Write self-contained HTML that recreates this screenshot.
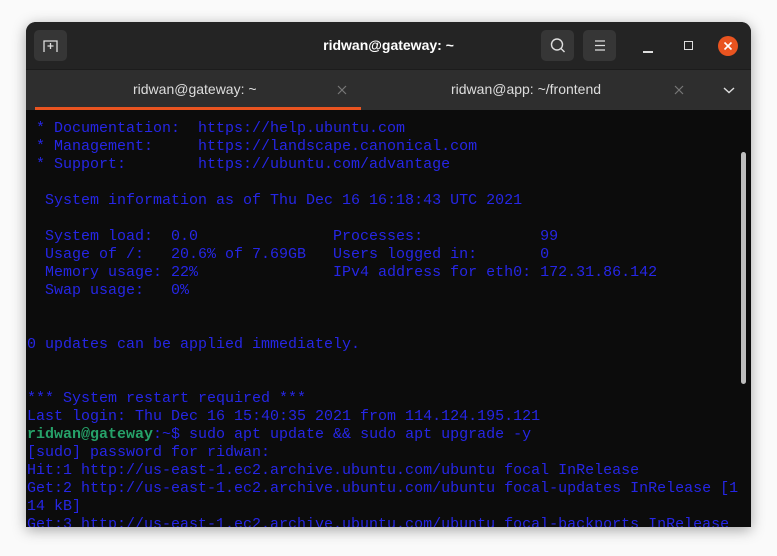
<!DOCTYPE html>
<html><head><style>
body{margin:0;width:777px;height:556px;background:#fafafa;overflow:hidden;font-family:"Liberation Sans",sans-serif}
.win{position:absolute;left:26px;top:22px;width:725px;height:505px;border-radius:10px 10px 0 0;background:#0c0c0c;overflow:hidden;box-shadow:0 3px 14px rgba(0,0,0,.35)}
.hdr{position:absolute;left:0;top:0;width:725px;height:47px;background:#242424;border-bottom:1px solid #1c1c1c}
.tabs{position:absolute;left:0;top:48px;width:725px;height:40px;background:#2e2e2e}
.btn{position:absolute;top:8px;width:33px;height:31px;border-radius:5px;background:#363636}
.title{position:absolute;left:0;width:725px;top:15px;text-align:center;color:#fff;font-weight:bold;font-size:14px}
.tab{position:absolute;top:11px;color:#ddd;font-size:14px}
.term{position:absolute;left:1px;top:98px;margin:0;font-family:"Liberation Mono",monospace;font-size:15px;line-height:18px;color:#2626e6;white-space:pre}
.g{color:#26a269;font-weight:bold}
.sb{position:absolute;left:715px;top:130px;width:5px;height:232px;background:#bdbdbd;border-radius:3px}
</style></head><body>
<div class="win">
<div class="hdr">
<div class="btn" style="left:8px"><svg width="33" height="31"><path d="M10 22V11h13v11M16.5 13v6M13.5 16h6" stroke="#ddd" stroke-width="1.3" fill="none"/></svg></div>
<div class="title">ridwan@gateway: ~</div>
<div class="btn" style="left:515px"><svg width="33" height="31"><circle cx="16" cy="14.5" r="5.5" stroke="#ddd" stroke-width="1.4" fill="none"/><path d="M20 18.5l3.5 3.5" stroke="#ddd" stroke-width="1.4"/></svg></div>
<div class="btn" style="left:557px"><svg width="33" height="31"><path d="M12 11h10M12 15.5h10M12 20h10" stroke="#ddd" stroke-width="1.3"/></svg></div>
<div style="position:absolute;left:617px;top:29px;width:10px;height:1.5px;background:#ddd"></div>
<div style="position:absolute;left:658px;top:19px;width:7px;height:7px;border:1.5px solid #ddd"></div>
<div style="position:absolute;left:692px;top:14px;width:20px;height:20px;border-radius:50%;background:#e95420"><svg width="20" height="20"><path d="M6.5 6.5l7 7M13.5 6.5l-7 7" stroke="#fff" stroke-width="1.6"/></svg></div>
</div>
<div class="tabs">
<div class="tab" style="left:107px">ridwan@gateway: ~</div>
<svg style="position:absolute;left:311px;top:15px" width="10" height="10"><path d="M1 1l8 8M9 1l-8 8" stroke="#777" stroke-width="1.2"/></svg>
<div style="position:absolute;left:9px;top:37px;width:326px;height:3px;background:#e95420"></div>
<div class="tab" style="left:425px">ridwan@app: ~/frontend</div>
<svg style="position:absolute;left:648px;top:15px" width="10" height="10"><path d="M1 1l8 8M9 1l-8 8" stroke="#777" stroke-width="1.2"/></svg>
<svg style="position:absolute;left:697px;top:15px" width="12" height="10"><path d="M1 3l5 4.5 5-4.5" stroke="#ddd" stroke-width="1.4" fill="none"/></svg>
</div>
<pre class="term"> * Documentation:  https://help.ubuntu.com
 * Management:     https://landscape.canonical.com
 * Support:        https://ubuntu.com/advantage

  System information as of Thu Dec 16 16:18:43 UTC 2021

  System load:  0.0               Processes:             99
  Usage of /:   20.6% of 7.69GB   Users logged in:       0
  Memory usage: 22%               IPv4 address for eth0: 172.31.86.142
  Swap usage:   0%


0 updates can be applied immediately.


*** System restart required ***
Last login: Thu Dec 16 15:40:35 2021 from 114.124.195.121
<span class="g">ridwan@gateway</span>:~$ sudo apt update &amp;&amp; sudo apt upgrade -y
[sudo] password for ridwan:
Hit:1 http://us-east-1.ec2.archive.ubuntu.com/ubuntu focal InRelease
Get:2 http://us-east-1.ec2.archive.ubuntu.com/ubuntu focal-updates InRelease [1
14 kB]
Get:3 http://us-east-1.ec2.archive.ubuntu.com/ubuntu focal-backports InRelease</pre>
<div class="sb"></div>
</div>
</body></html>
